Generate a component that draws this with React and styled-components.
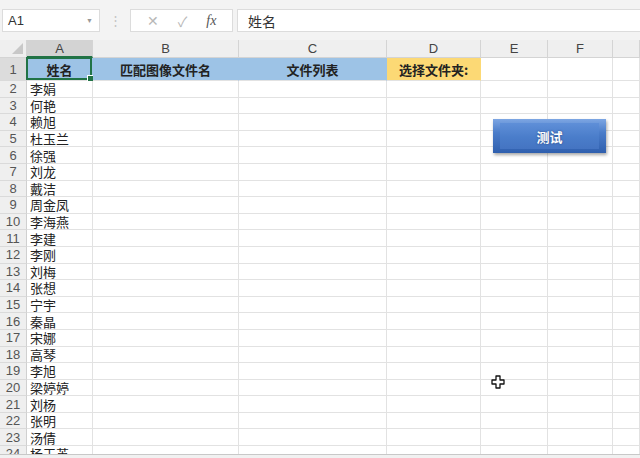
import React from 'react'
import styled, { createGlobalStyle } from 'styled-components'

const GlobalStyle = createGlobalStyle`
html, body {
  margin: 0;
  padding: 0;
  background: #ffffff;
  overflow: hidden;
}
body {
  font-family: "Liberation Sans", "Noto Sans CJK SC", sans-serif;
}
`

const COLS = '27px 66px 146px 148px 94px 67px 65px 1fr'

//Page
const Page = styled.div`
width: 640px;
height: 458px;
position: relative;
overflow: hidden;
background: #fff;
`

//Formula bar
const TopBar = styled.div`
height: 40px;
background: #f3f3f3;
display: flex;
align-items: flex-start;
padding-top: 9px;
box-sizing: border-box;
`

const NameBox = styled.div`
margin-left: 2px;
width: 98px;
height: 23px;
box-sizing: border-box;
background: #fff;
border: 1px solid #dcdcdc;
display: flex;
align-items: center;
justify-content: space-between;
padding: 0 6px 0 5px;
font-size: 13px;
color: #333;
`

const Caret = styled.span`
font-size: 7px;
color: #999;
`

const Dots = styled.div`
width: 30px;
height: 23px;
display: flex;
align-items: center;
justify-content: center;
color: #c4c4c4;
font-size: 13px;
`

const FxBox = styled.div`
width: 103px;
height: 23px;
box-sizing: border-box;
background: #fff;
border: 1px solid #dcdcdc;
display: flex;
align-items: center;
justify-content: space-around;
padding: 0 6px;
color: #b8b8b8;
font-size: 14px;
`

const FxText = styled.span`
font-family: "Liberation Serif", serif;
font-style: italic;
color: #555;
font-size: 14px;
`

const FormulaInput = styled.div`
margin-left: 4px;
flex: 1;
height: 23px;
box-sizing: border-box;
background: #fff;
border: 1px solid #dcdcdc;
border-right: none;
display: flex;
align-items: center;
padding-left: 10px;
font-size: 14px;
color: #333;
font-family: "Noto Sans CJK SC", sans-serif;
`

//Sheet grid
const Sheet = styled.div`
display: grid;
grid-template-columns: ${COLS};
`

const ColHead = styled.div`
height: 18px;
box-sizing: border-box;
background: ${(p) => (p.active ? '#d3d3d3' : '#efefef')};
border-right: 1px solid #d4d4d4;
border-bottom: ${(p) => (p.active ? '2px solid #217346' : '1px solid #d4d4d4')};
display: flex;
align-items: center;
justify-content: center;
font-size: 13px;
line-height: 1;
color: #444;
`

const Corner = styled(ColHead)`
position: relative;
background: #efefef;
&::after {
  content: '';
  position: absolute;
  right: 3px;
  bottom: 3px;
  width: 0;
  height: 0;
  border-left: 11px solid transparent;
  border-bottom: 11px solid #c8c8c8;
}
`

const RowHead = styled.div`
height: ${(p) => p.h}px;
box-sizing: border-box;
background: ${(p) => (p.active ? '#dcdcdc' : '#efefef')};
border-right: 1px solid #d0d0d0;
border-bottom: 1px solid #dadada;
display: flex;
align-items: center;
justify-content: center;
font-size: 13px;
line-height: 1;
color: #555;
`

const Cell = styled.div`
height: ${(p) => p.h}px;
box-sizing: border-box;
background: ${(p) => p.bg || '#fff'};
border-right: 1px solid ${(p) => (p.bg ? 'transparent' : '#e2e2e2')};
border-bottom: 1px solid #e2e2e2;
display: flex;
align-items: center;
justify-content: ${(p) => (p.center ? 'center' : 'flex-start')};
padding-left: ${(p) => (p.center ? 0 : 3)}px;
font-family: "Noto Sans CJK SC", sans-serif;
font-size: 13px;
line-height: 13px;
font-weight: ${(p) => (p.bold ? 700 : 400)};
color: #222;
white-space: nowrap;
position: relative;
`

const Selected = styled.div`
position: absolute;
inset: -1px 0 0 -1px;
border: 2px solid #217346;
pointer-events: none;
&::after {
  content: '';
  position: absolute;
  right: -4px;
  bottom: -4px;
  width: 5px;
  height: 5px;
  background: #217346;
  border: 1px solid #fff;
}
`

//Button overlay
const MacroButton = styled.div`
position: absolute;
left: 493px;
top: 119px;
width: 113px;
height: 34px;
box-sizing: border-box;
background: linear-gradient(180deg, #7da6e3 0%, #4a7cc9 40%, #2f5fae 100%);
box-shadow: 1px 2px 3px rgba(0, 0, 0, 0.35);
display: flex;
align-items: center;
justify-content: center;
padding: 4px 7px;
`

const ButtonFace = styled.div`
width: 100%;
height: 100%;
background: linear-gradient(180deg, #5f8fd8 0%, #4a7dca 55%, #4474c2 100%);
display: flex;
align-items: center;
justify-content: center;
color: #fff;
font-family: "Noto Sans CJK SC", sans-serif;
font-weight: 700;
font-size: 13px;
text-shadow: 0 0 2px rgba(20, 40, 90, 0.7);
`

const Cursor = styled.svg`
position: absolute;
left: 491px;
top: 375px;
`

const BottomBar = styled.div`
position: absolute;
left: 0;
right: 0;
top: 454px;
height: 4px;
background: #f1f1f1;
border-top: 1px solid #c8c8c8;
`

const names = [
  '李娟', '何艳', '赖旭', '杜玉兰', '徐强', '刘龙', '戴洁', '周金凤', '李海燕', '李建',
  '李刚', '刘梅', '张想', '宁宇', '秦晶', '宋娜', '高琴', '李旭', '梁婷婷', '刘杨',
  '张明', '汤倩', '杨玉英',
]

// G is scrolled past the right edge, so its header shows no letter
const letters = ['A', 'B', 'C', 'D', 'E', 'F', '']
const BLUE = '#9dc3e6'
const YELLOW = '#fcd975'

const App = () => {
  return (
    <Page>
      <GlobalStyle />
      <TopBar>
        <NameBox>
          A1 <Caret>▼</Caret>
        </NameBox>
        <Dots>⋮</Dots>
        <FxBox>
          <span>✕</span>
          <span>✓</span>
          <FxText>fx</FxText>
        </FxBox>
        <FormulaInput>姓名</FormulaInput>
      </TopBar>
      <Sheet>
        <Corner />
        {letters.map((l, i) => (
          <ColHead key={i} active={l === 'A'}>{l}</ColHead>
        ))}

        <RowHead h={23} active>1</RowHead>
        <Cell h={23} bg={BLUE} bold center>
          姓名
          <Selected />
        </Cell>
        <Cell h={23} bg={BLUE} bold center>匹配图像文件名</Cell>
        <Cell h={23} bg={BLUE} bold center>文件列表</Cell>
        <Cell h={23} bg={YELLOW} bold center>选择文件夹:</Cell>
        <Cell h={23} />
        <Cell h={23} />
        <Cell h={23} />

        {names.map((n, i) => (
          <React.Fragment key={n + i}>
            <RowHead h={16.6}>{i + 2}</RowHead>
            <Cell h={16.6}>{n}</Cell>
            <Cell h={16.6} />
            <Cell h={16.6} />
            <Cell h={16.6} />
            <Cell h={16.6} />
            <Cell h={16.6} />
            <Cell h={16.6} />
          </React.Fragment>
        ))}
      </Sheet>

      <MacroButton>
        <ButtonFace>测试</ButtonFace>
      </MacroButton>

      <Cursor width="14" height="14" viewBox="0 0 14 14">
        <path
          d="M5 1 H9 V5 H13 V9 H9 V13 H5 V9 H1 V5 H5 Z"
          fill="#fff"
          stroke="#111"
          strokeWidth="1.3"
          strokeLinejoin="round"
        />
      </Cursor>
      <BottomBar />
    </Page>
  )
}

export default App
